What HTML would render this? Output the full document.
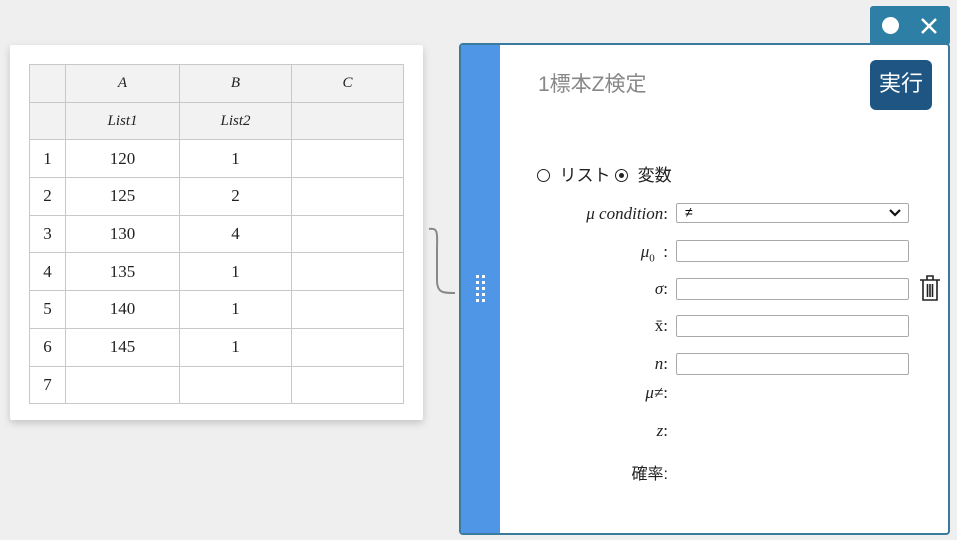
<!DOCTYPE html>
<html><head><meta charset="utf-8"><style>
body{margin:0;width:957px;height:540px;background:#efefef;position:relative;overflow:hidden;font-family:"Liberation Serif","Noto Serif CJK SC",serif}
.card{position:absolute;left:10px;top:45px;width:413px;height:375px;background:#fff;box-shadow:0 3px 8px rgba(0,0,0,.18);border-radius:2px}
table{position:absolute;left:19px;top:19px;border-collapse:collapse}
td{border:1px solid #c8c8c8;text-align:center;font-size:17px;color:#222;padding:0;height:36.7px}
tr.h td{background:#f2f2f2;font-style:italic;font-size:15px}
.panel{position:absolute;left:459px;top:43px;width:487px;height:488px;background:#fff;border:2px solid #3a7a9c;border-radius:4px;overflow:hidden}
.strip{position:absolute;left:0;top:0;width:39px;height:100%;background:#4f96e6}
.tab{position:absolute;left:870px;top:6px;width:80px;height:39px;background:#2e7fa5;border-radius:3px}
.sans{font-family:"Liberation Sans","Noto Sans CJK JP",sans-serif}
.lbl{position:absolute;right:289px;font-style:italic;font-size:17px;color:#222;text-align:right}
.inp{position:absolute;left:676px;width:231px;height:20px;border:1px solid #aaa;border-radius:2px;background:#fff}
</style></head><body>
<div class="card"><table>
<tr class="h"><td style="width:35px"></td><td style="width:113px">A</td><td style="width:111px">B</td><td style="width:111px">C</td></tr>
<tr class="h"><td></td><td>List1</td><td>List2</td><td></td></tr>
<tr><td>1</td><td>120</td><td>1</td><td></td></tr>
<tr><td>2</td><td>125</td><td>2</td><td></td></tr>
<tr><td>3</td><td>130</td><td>4</td><td></td></tr>
<tr><td>4</td><td>135</td><td>1</td><td></td></tr>
<tr><td>5</td><td>140</td><td>1</td><td></td></tr>
<tr><td>6</td><td>145</td><td>1</td><td></td></tr>
<tr><td>7</td><td></td><td></td><td></td></tr>
</table></div>
<svg style="position:absolute;left:425px;top:225px" width="40" height="75"><path d="M4 4 C14 2 12 10 12 25 L12 55 C12 68 18 68 30 68" fill="none" stroke="#888" stroke-width="2"/></svg>
<div class="tab"><div style="position:absolute;left:12px;top:11px;width:17px;height:17px;border-radius:50%;background:#fff"></div>
<svg style="position:absolute;left:50px;top:11px" width="18" height="18"><path d="M2 2L16 16M16 2L2 16" stroke="#fff" stroke-width="2.5"/></svg></div>
<div class="panel"><div class="strip">
<svg style="position:absolute;left:13px;top:230px" width="14" height="30" fill="#fff"><g><rect x="2" y="0" width="3" height="3"/><rect x="8" y="0" width="3" height="3"/><rect x="2" y="6" width="3" height="3"/><rect x="8" y="6" width="3" height="3"/><rect x="2" y="12" width="3" height="3"/><rect x="8" y="12" width="3" height="3"/><rect x="2" y="18" width="3" height="3"/><rect x="8" y="18" width="3" height="3"/><rect x="2" y="24" width="3" height="3"/><rect x="8" y="24" width="3" height="3"/></g></svg></div>
<div class="sans" style="position:absolute;left:77px;top:23px;font-size:21px;color:#888">1標本Z検定</div>
<div class="sans" style="position:absolute;left:409px;top:15px;width:62px;height:50px;background:#1f5583;border-radius:6px;color:#fff;font-size:22px;line-height:48px;text-align:center">実行</div>
</div>
<div class="sans" style="position:absolute;left:537px;top:161px;font-size:17px;color:#222">
<span style="display:inline-block;width:11px;height:11px;border:1.5px solid #222;border-radius:50%;vertical-align:-1px"></span>&nbsp; リスト <span style="display:inline-block;width:11px;height:11px;border:1.5px solid #222;border-radius:50%;vertical-align:-1px;position:relative"><span style="position:absolute;left:3px;top:3px;width:5px;height:5px;border-radius:50%;background:#222"></span></span>&nbsp; 変数</div>
<div class="lbl" style="top:204px">μ condition<span style="font-style:normal">:</span></div>
<div class="inp" style="top:203px;height:18px"><span class="sans" style="position:absolute;left:8px;top:0;font-size:14px">≠</span>
<svg style="position:absolute;right:6px;top:4px" width="14" height="10"><path d="M2 2L7 7L12 2" fill="none" stroke="#111" stroke-width="2.2"/></svg></div>
<div class="lbl" style="top:242px">μ<sub style="font-style:normal;font-size:11px">0</sub><span style="font-style:normal">&nbsp; :</span></div>
<div class="inp" style="top:240px"></div>
<div class="lbl" style="top:279px">σ<span style="font-style:normal">:</span></div>
<div class="inp" style="top:278px"></div>
<svg style="position:absolute;left:918px;top:274px" width="24" height="28"><path d="M2 6H22M9 6V2H15V6M5 6V26H19V6M9.5 10V23M12 10V23M14.5 10V23" fill="none" stroke="#222" stroke-width="1.6"/></svg>
<div class="lbl" style="top:316px;font-style:normal">x̄:</div>
<div class="inp" style="top:315px"></div>
<div class="lbl" style="top:354px">n<span style="font-style:normal">:</span></div>
<div class="inp" style="top:353px"></div>
<div class="lbl" style="top:383px">μ≠<span style="font-style:normal">:</span></div>
<div class="lbl" style="top:421px">z<span style="font-style:normal">:</span></div>
<div class="lbl sans" style="top:460px;font-style:normal;font-size:16px">確率:</div>
</body></html>
